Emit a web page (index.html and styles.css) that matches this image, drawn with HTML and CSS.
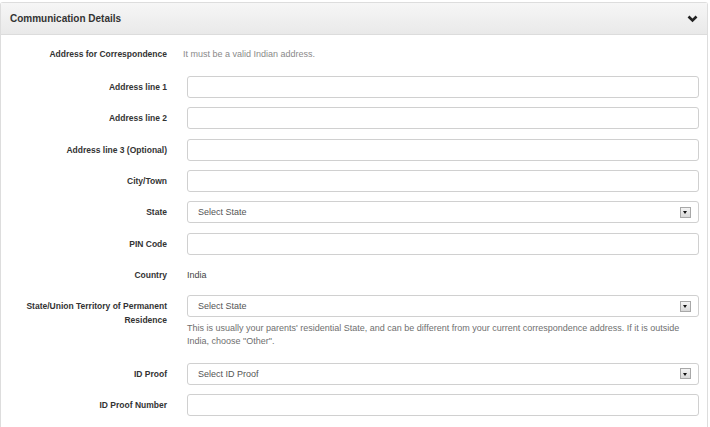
FILE: index.html
```html
<!DOCTYPE html>
<html lang="en">
<head>
  <meta charset="UTF-8" />
  <meta name="viewport" content="width=device-width, initial-scale=1.0">
  <title>Communication Details</title>
  <link rel="stylesheet" href="styles.css">
</head>
<body>
  <div class="panel">
    <div class="panel-heading">
      <span class="panel-title">Communication Details</span>
      <svg class="chevron" width="11" height="8" viewBox="0 0 11 8">
        <polyline points="1.5,1.5 5.5,5.5 9.5,1.5" fill="none" stroke="#222" stroke-width="2.6" />
      </svg>
    </div>

    <div class="panel-body">
      <div class="row first">
        <div class="label">Address for Correspondence</div>
        <div class="field"><span class="note">It must be a valid Indian address.</span></div>
      </div>

      <div class="row">
        <label class="label" for="addr1">Address line 1</label>
        <div class="field"><input id="addr1" type="text"></div>
      </div>

      <div class="row">
        <label class="label" for="addr2">Address line 2</label>
        <div class="field"><input id="addr2" type="text"></div>
      </div>

      <div class="row">
        <label class="label" for="addr3">Address line 3 (Optional)</label>
        <div class="field"><input id="addr3" type="text"></div>
      </div>

      <div class="row">
        <label class="label" for="city">City/Town</label>
        <div class="field"><input id="city" type="text"></div>
      </div>

      <div class="row">
        <div class="label">State</div>
        <div class="field">
          <div class="select"><span>Select State</span><span class="arrow"></span></div>
        </div>
      </div>

      <div class="row">
        <label class="label" for="pin">PIN Code</label>
        <div class="field"><input id="pin" type="text"></div>
      </div>

      <div class="row">
        <div class="label">Country</div>
        <div class="field"><span class="static">India</span></div>
      </div>

      <div class="row">
        <div class="label">State/Union Territory of Permanent Residence</div>
        <div class="field">
          <div class="select"><span>Select State</span><span class="arrow"></span></div>
          <p class="help">This is usually your parents' residential State, and can be different from your current correspondence address. If it is outside India, choose "Other".</p>
        </div>
      </div>

      <div class="row">
        <div class="label">ID Proof</div>
        <div class="field">
          <div class="select"><span>Select ID Proof</span><span class="arrow"></span></div>
        </div>
      </div>

      <div class="row">
        <label class="label" for="idnum">ID Proof Number</label>
        <div class="field"><input id="idnum" type="text"></div>
      </div>
    </div>
  </div>
</body>
</html>
```

FILE: styles.css
```css
body {
  margin: 0;
  padding-top: 2px;
  background: #fff;
  color: #333;
  font-family: "Liberation Sans", Arial, sans-serif;
}

.panel {
  width: 706px;
  border: 1px solid #ddd;
  border-bottom: none;
  border-radius: 3px 3px 0 0;
  height: 440px;
}

.panel-heading {
  height: 31px;
  display: flex;
  align-items: center;
  justify-content: space-between;
  padding: 0 9px 0 9px;
  background: linear-gradient(#f6f6f6, #e9e9e9);
  border-bottom: 1px solid #dcdcdc;
}

.panel-title {
  font-size: 10px;
  font-weight: bold;
  color: #333;
}

.chevron {
  margin-top: 1px;
}

.panel-body {
  padding-top: 8px;
}

.row {
  display: flex;
  align-items: flex-start;
  margin-bottom: 9.33px;
}

.row.first {
  margin-bottom: 15px;
}

.label {
  width: 166px;
  flex: none;
  text-align: right;
  font-size: 8.5px;
  font-weight: bold;
  line-height: 14px;
  padding-top: 4px;
  color: #333;
}

.field {
  width: 512px;
  margin-left: 20px;
  flex: none;
}

.note,
.static {
  display: block;
  font-size: 9px;
  line-height: 14px;
  padding-top: 4px;
}

.note {
  color: #8a8a8a;
  margin-left: -4px;
}

.static {
  color: #444;
  height: 18px;
}

input {
  box-sizing: border-box;
  width: 100%;
  height: 22px;
  margin: 0;
  border: 1px solid #d0d0d0;
  border-radius: 3px;
  background: #fff;
  display: block;
}

.select {
  box-sizing: border-box;
  height: 22px;
  border: 1px solid #d0d0d0;
  border-radius: 3px;
  display: flex;
  align-items: center;
  justify-content: space-between;
  padding: 0 7px 0 10px;
  font-size: 9px;
  color: #555;
}

.arrow {
  box-sizing: border-box;
  width: 11px;
  height: 11px;
  border: 1px solid #a8a8a8;
  background: linear-gradient(#f4f4f4, #d8d8d8);
  position: relative;
}

.arrow::after {
  content: "";
  position: absolute;
  left: 2px;
  top: 3.5px;
  border-left: 2.5px solid transparent;
  border-right: 2.5px solid transparent;
  border-top: 3px solid #111;
}

.help {
  margin: 5px 0 0 0;
  font-size: 9px;
  line-height: 13px;
  color: #6f6f6f;
  padding-right: 6px;
}

.row:has(.help) {
  margin-bottom: 14.5px;
}
```
